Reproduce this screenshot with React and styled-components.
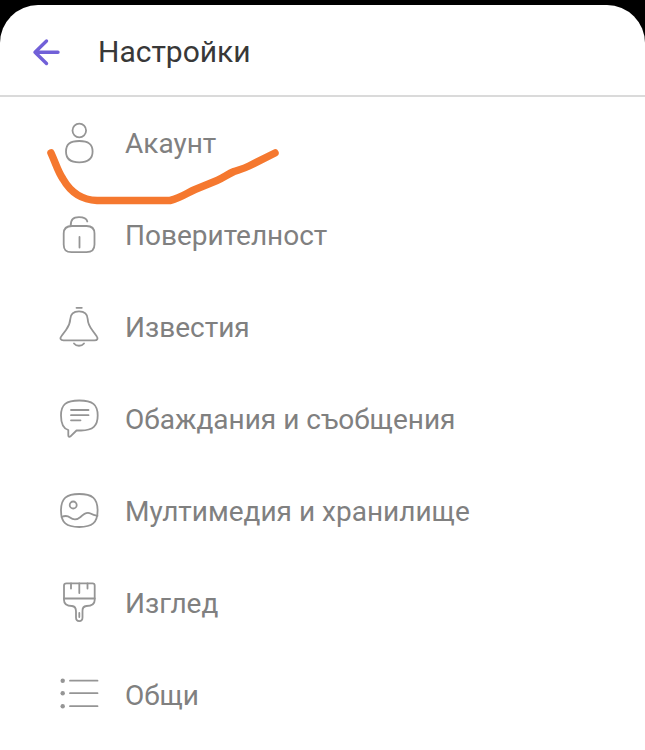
import React from 'react'
import styled, { createGlobalStyle } from 'styled-components'

const COLORS = {
    text: '#383838',
    muted: '#808080',
    icon: '#959595',
    purple: '#7160d8',
    line: '#dadada',
    marker: '#f5782f',
}

const AccountIcon = () => (
    <StyledIcon viewBox="0 0 60 60" aria-hidden="true">
        <circle cx="29.3" cy="17.5" r="6.8" />
        <path d="M29.3 28C38.5 28 42.6 31 42.6 38.6C42.6 46 38.5 49.3 29.3 49.3C20 49.3 16 46 16 38.6C16 31 20 28 29.3 28Z" />
    </StyledIcon>
)

const PrivacyIcon = () => (
    <StyledIcon viewBox="0 0 60 60" aria-hidden="true">
        <path d="M22 21H36.5C42 21 44.5 23.5 44.5 28.5V39.5C44.5 45 42 47.2 36.5 47.2H21.5C16 47.2 13.7 45 13.7 39.5V28.5C13.7 23.5 16 21 22 21Z" />
        <path d="M20.7 21C20.7 14.5 23 12.2 29 12.2C34 12.2 36.5 13.2 37.3 16.5" />
        <path d="M29.5 32V42.5" />
    </StyledIcon>
)

const BellIcon = () => (
    <StyledIcon viewBox="0 0 60 60" aria-hidden="true">
        <path d="M29 14.3C35 14.3 37.5 17 37.7 22C37.9 27 39 29 42.5 33.5L46.5 39C48.5 41.8 47.3 43.3 44.5 43.3H13.5C10.6 43.3 9.5 41.5 11.5 39L16 33C19.3 28.5 20.1 26.5 20.3 22C20.5 17 23 14.3 29 14.3Z" />
        <path d="M26.5 10.8H31.8" />
        <path d="M24 46.5C26.5 49.5 31.5 49.5 34 46.5" />
    </StyledIcon>
)

const MessageIcon = () => (
    <StyledIcon viewBox="0 0 60 60" aria-hidden="true">
        <path d="M29.3 11.5C42.5 11.5 47.7 15.5 47.7 26.5C47.7 37 43 41.3 31 41.5H26.5L20.5 47.3C19.3 48.3 18.3 47.8 18.3 46.3V41C13 39.5 11 35 11 26.5C11 15.5 16 11.5 29.3 11.5Z" />
        <path d="M21 21H38.5M21 26.2H38.5M21 31.3H30.5" />
    </StyledIcon>
)

const MediaIcon = () => (
    <StyledIcon viewBox="0 0 60 60" aria-hidden="true">
        <path d="M29.2 13C42 13 47.6 17 47.6 29.5C47.6 42 42 46 29.2 46C16.5 46 11 42 11 29.5C11 17 16.5 13 29.2 13Z" />
        <circle cx="23.2" cy="24" r="3.5" />
        <path d="M11.5 36C15 34.5 17.5 34.5 20 36.5C23.5 39.3 27 39 30.5 36C33.5 33 37.5 30.800 40.5 32.5C43 34 45.5 34.5 47.5 34.8" />
    </StyledIcon>
)

const BrushIcon = () => (
    <StyledIcon viewBox="0 0 60 60" aria-hidden="true">
        <path d="M16.5 10.3H42.5Q44.7 10.3 44.7 12.5V27C44.7 31 42 33 36.5 33C33.5 33.3 32.3 35.5 32.5 38.5V44.5C32.5 49.2 26 49.2 26 44.5V38.5C26 35.5 25 33.3 22 33C17 33 14 31 14 27V12.5Q14 10.3 16.5 10.3Z" />
        <path d="M14 25.5H44.7M21 10.5V15.5M29.3 10.5V20M37.5 10.5V15.5M29.3 40V44" />
    </StyledIcon>
)

const ListIcon = () => (
    <StyledIcon viewBox="0 0 60 60" aria-hidden="true">
        <path d="M20 15.7H47.5M20 28.2H47.5M20 41.2H47.5" />
        <g fill={COLORS.icon} stroke="none">
            <circle cx="12.7" cy="15.7" r="2.2" />
            <circle cx="12.7" cy="28.2" r="2.2" />
            <circle cx="12.7" cy="41.2" r="2.2" />
        </g>
    </StyledIcon>
)

const MENU = [
    { id: 'account', label: 'Акаунт', Icon: AccountIcon, marked: true },
    { id: 'privacy', label: 'Поверителност', Icon: PrivacyIcon },
    { id: 'notifications', label: 'Известия', Icon: BellIcon },
    { id: 'calls', label: 'Обаждания и съобщения', Icon: MessageIcon },
    { id: 'media', label: 'Мултимедия и хранилище', Icon: MediaIcon },
    { id: 'appearance', label: 'Изглед', Icon: BrushIcon },
    { id: 'general', label: 'Общи', Icon: ListIcon },
]

const App = () => {
    return (
        <>
            <GlobalStyle />
            <StyledScreen>
                <StyledHeader>
                    <StyledBackButton type="button" aria-label="Назад">
                        <svg width="32" height="32" viewBox="0 0 32 32" aria-hidden="true">
                            <path d="M28 16.2H5M16.5 5L5 16.2L16.5 27.5" />
                        </svg>
                    </StyledBackButton>
                    <StyledTitle>Настройки</StyledTitle>
                </StyledHeader>
                <nav>
                    <StyledList>
                        {MENU.map(({ id, label, Icon, marked }) => (
                            <StyledItem key={id}>
                                <StyledLink href={`#${id}`}>
                                    <Icon />
                                    <StyledLabel>{label}</StyledLabel>
                                </StyledLink>
                                {marked && (
                                    <StyledMarker viewBox="0 0 250 70" aria-hidden="true">
                                        <path d="M11 13C16 24 18 32 23 39C31 53 42 60 57 60.5H130C141 58 147 53 155 49.5L177 40.5C183 38 188 34 194 31.5C200 29.5 204 28.5 209 26L235 13" />
                                    </StyledMarker>
                                )}
                            </StyledItem>
                        ))}
                    </StyledList>
                </nav>
            </StyledScreen>
        </>
    )
}

export default App

const GlobalStyle = createGlobalStyle`
* {
    box-sizing: border-box;
}
body {
    margin: 0;
    background: #000000;
    font-family: Roboto, 'Noto Sans', sans-serif;
}
`

const StyledScreen = styled.div`
min-height: calc(100vh - 5px);
margin-top: 5px;
border-radius: 38px 38px 0 0;
background: #ffffff;
overflow: hidden;
`

const StyledHeader = styled.header`
display: flex;
align-items: center;
gap: 36px;
height: 92px;
padding: 4px 30px 0;
border-bottom: 2px solid ${COLORS.line};
`

const StyledBackButton = styled.button`
display: flex;
padding: 0;
border: 0;
background: none;
cursor: pointer;

svg {
    fill: none;
    stroke: ${COLORS.purple};
    stroke-width: 3.4;
    stroke-linecap: round;
    stroke-linejoin: round;
}
`

const StyledTitle = styled.h1`
margin: 0;
color: ${COLORS.text};
font-size: 30px;
font-weight: 400;
line-height: 36px;
`

const StyledList = styled.ul`
margin: 0;
padding: 0;
list-style: none;
`

const StyledItem = styled.li`
position: relative;
`

const StyledLink = styled.a`
display: flex;
align-items: center;
gap: 15px;
min-height: 92px;
padding: 0 50px;
color: ${COLORS.muted};
text-decoration: none;
`

const StyledLabel = styled.span`
padding-top: 2px;
font-size: 28px;
line-height: 32px;
`

const StyledIcon = styled.svg`
flex: none;
width: 60px;
height: 60px;
fill: none;
stroke: ${COLORS.icon};
stroke-width: 1.8;
stroke-linecap: round;
stroke-linejoin: round;
`

/* hand-drawn stroke lying over the row */
const StyledMarker = styled.svg`
position: absolute;
top: 43px;
left: 40px;
width: 250px;
height: 70px;
fill: none;
stroke: ${COLORS.marker};
stroke-width: 7.5;
stroke-linecap: round;
stroke-linejoin: round;
pointer-events: none;
`
